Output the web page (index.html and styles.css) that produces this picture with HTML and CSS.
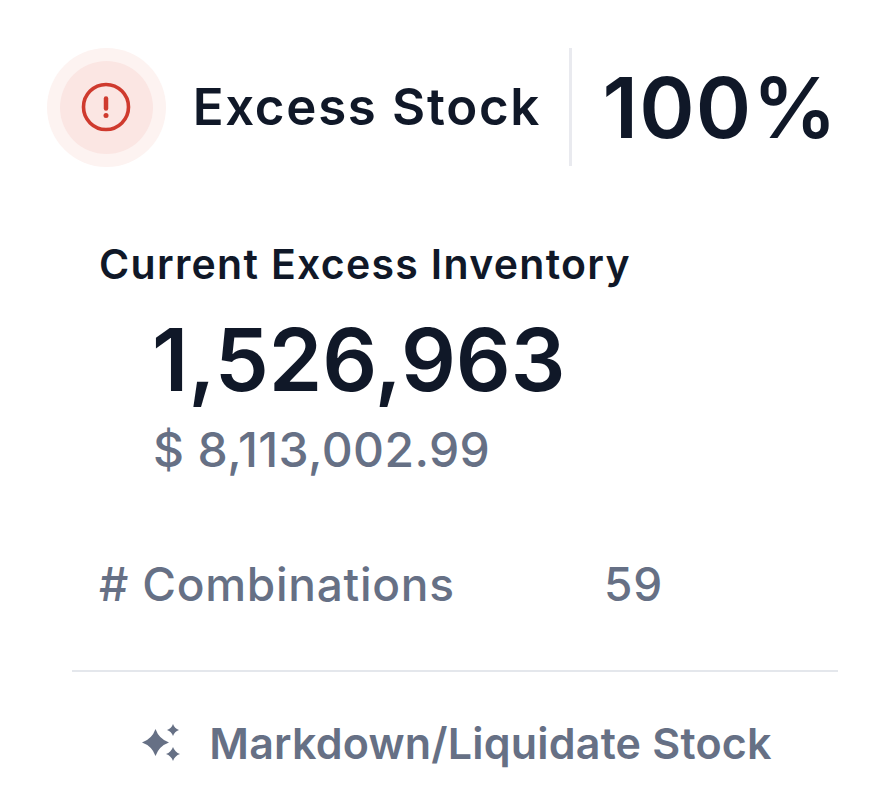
FILE: index.html
```html
<!DOCTYPE html>
<html lang="en">
<head>
    <meta charset="UTF-8">
    <title>Excess Stock</title>
    <link rel="stylesheet" href="styles.css">
</head>
<body>
    <div class="card">
        <div class="header">
            <div class="icon-ring">
                <div class="icon-inner">
                    <svg width="52" height="52" viewBox="0 0 52 52" fill="none" stroke="#cf3a2e" stroke-width="3.600" stroke-linecap="round">
                        <circle cx="26" cy="26" r="22.500"/>
                        <path d="M26 17.500v10" stroke-width="4.500"/>
                        <path d="M26 34.500h.01" stroke-width="5"/>
                    </svg>
                </div>
            </div>
            <div class="title">Excess Stock</div>
            <div class="percent">100%</div>
        </div>
        <div class="body">
            <div class="label">Current Excess Inventory</div>
            <div class="amount">1,526,963</div>
            <div class="money">$ 8,113,002.99</div>
            <div class="combos">
                <span class="combos-label"># Combinations</span>
                <span class="combos-value">59</span>
            </div>
        </div>
        <div class="footer">
            <svg width="40" height="38" viewBox="0 0 40 38" fill="#667085">
                <path d="M13.500 5Q17 15 27 18.500 17 22 13.500 32 10 22 0 18.500 10 15 13.500 5z"/>
                <path d="M31 0Q32.500 4.500 37 6 32.500 7.500 31 12 29.500 7.500 25 6 29.500 4.500 31 0z"/>
                <path d="M31 23Q32.800 28.200 38 30 32.800 31.800 31 37 29.200 31.800 24 30 29.200 28.200 31 23z"/>
            </svg>
            <span class="footer-text">Markdown/Liquidate Stock</span>
        </div>
    </div>
</body>
</html>
```

FILE: styles.css
```css
body {
    margin: 0;
    background-color: #fff;
    font-family: Inter, sans-serif;
    color: #101828;
}
.card {
    width: 888px;
    height: 811px;
    box-sizing: border-box;
    padding: 48px 50px 0 47px;
}
.header {
    display: flex;
    align-items: center;
    height: 118px;
}
.icon-ring {
    width: 119px;
    height: 119px;
    border-radius: 50%;
    background-color: #fdf3f1;
    display: flex;
    align-items: center;
    justify-content: center;
}
.icon-inner {
    width: 93px;
    height: 93px;
    border-radius: 50%;
    background-color: #fbe6e3;
    display: flex;
    align-items: center;
    justify-content: center;
}
.title {
    margin-left: 27px;
    width: 378px;
    font-size: 51px;
    font-weight: 600;
    letter-spacing: 1.700px;
    line-height: 118px;
    border-right: 3px solid #e9eaef;
}
.percent {
    margin-left: 30px;
    font-size: 84px;
    font-weight: 600;
    letter-spacing: 1.200px;
}
.body {
    padding: 72px 0 0 52px;
}
.label {
    font-size: 41px;
    font-weight: 600;
    letter-spacing: 1.300px;
    line-height: 52px;
}
.amount {
    margin: 18px 0 0 53px;
    font-size: 86px;
    font-weight: 620;
    letter-spacing: -.1px;
    line-height: 104px;
}
.money {
    margin: 8px 0 0 54px;
    font-size: 48px;
    font-weight: 450;
    letter-spacing: .4px;
    line-height: 60px;
    color: #667085;
}
.combos {
    margin-top: 74px;
    display: flex;
    align-items: center;
    font-size: 46px;
    font-weight: 500;
    letter-spacing: .75px;
    line-height: 60px;
    color: #667085;
}
.combos-label {
    width: 505px;
}
.footer {
    margin: 56px 0 0 25px;
    padding: 45px 0 0 4px;
    border-top: 2px solid #e4e7ec;
    display: flex;
    align-items: center;
    justify-content: center;
    gap: 27px;
    color: #667085;
}
.footer-text {
    font-size: 43px;
    font-weight: 600;
    letter-spacing: .2px;
}
```
